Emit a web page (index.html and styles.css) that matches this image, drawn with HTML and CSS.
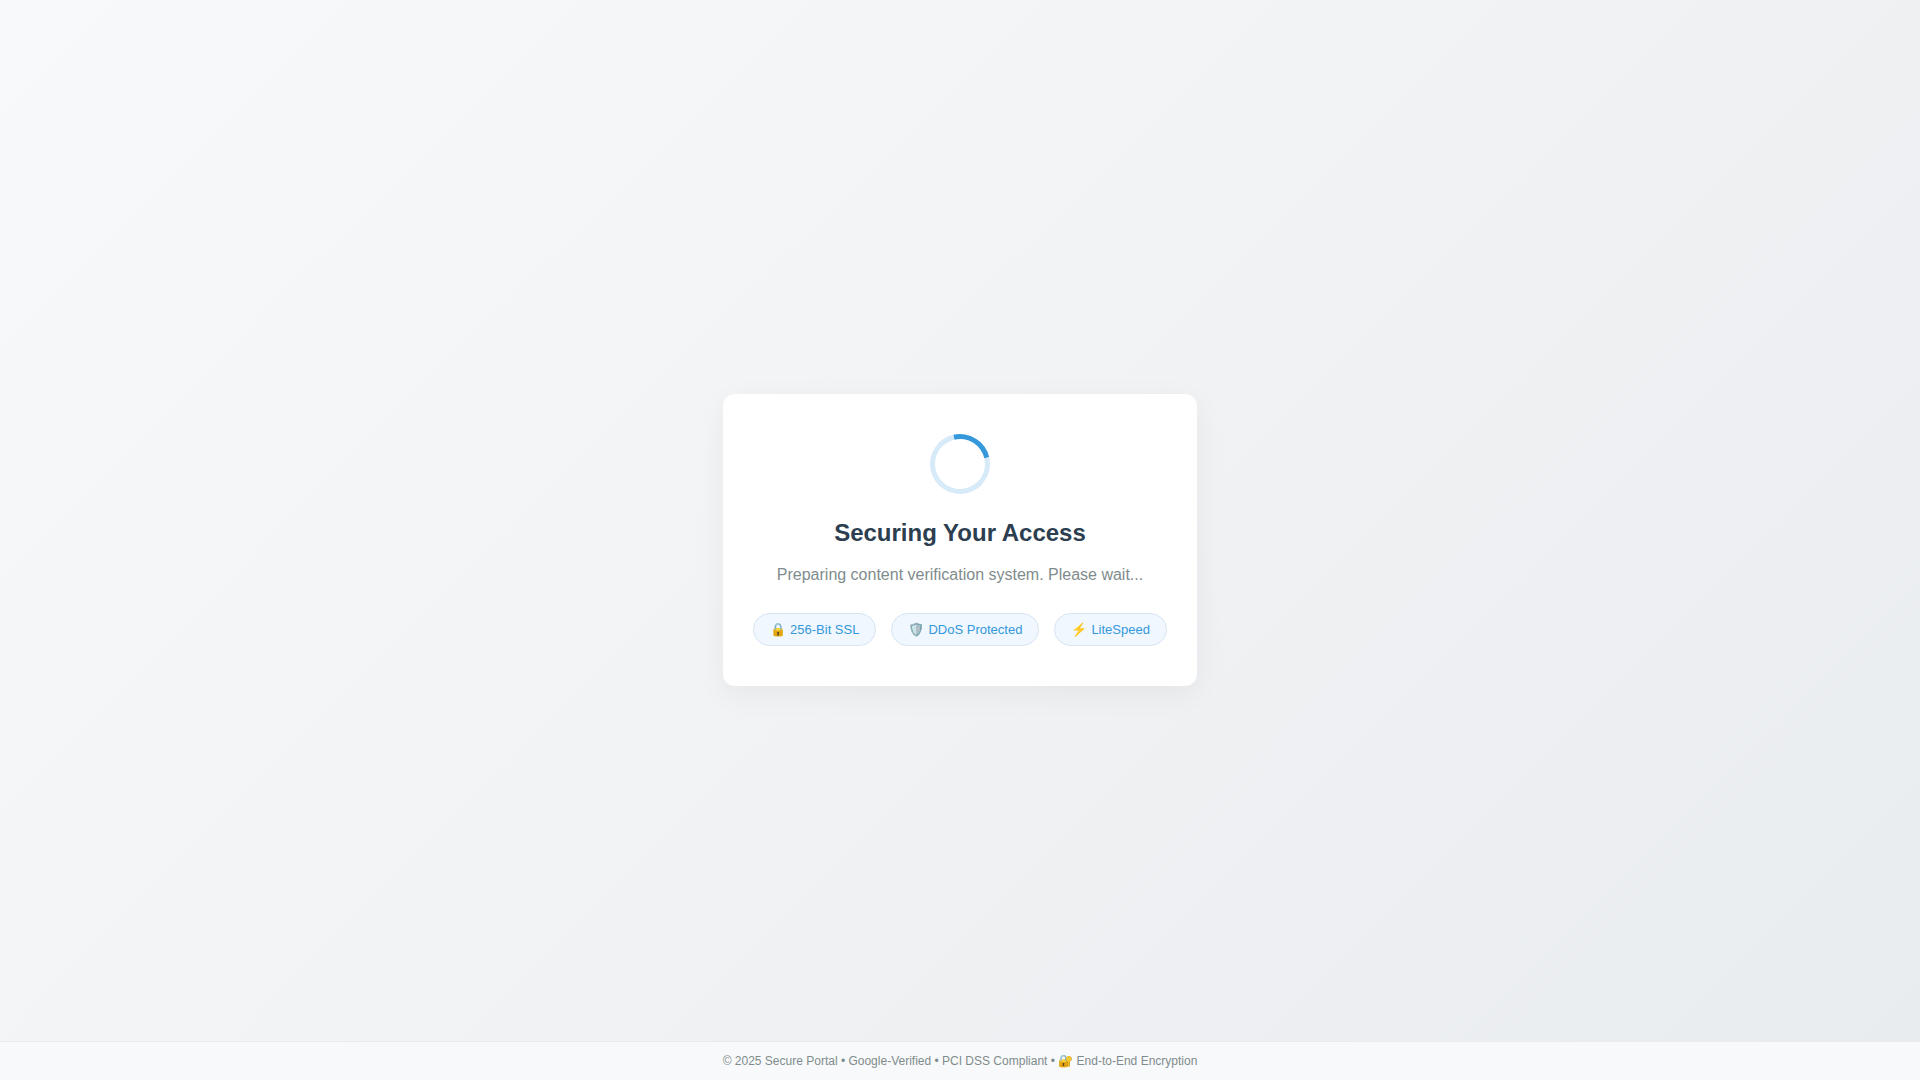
FILE: index.html
```html
<!DOCTYPE html>
<html lang="en">
<head>
    <meta charset="UTF-8">
    <meta name="viewport" content="width=device-width, initial-scale=1.0">
    <title>Secure Portal</title>
    <link rel="stylesheet" href="styles.css">
</head>
<body>
<main class="main">
    <div class="card">
        <div class="spinner"></div>
        <h1>Securing Your Access</h1>
        <p class="message">Preparing content verification system. Please wait...</p>
        <div class="badges">
            <span class="badge"><span>🔒</span> 256-Bit SSL</span>
            <span class="badge"><span>🛡️</span> DDoS Protected</span>
            <span class="badge"><span>⚡</span> LiteSpeed</span>
        </div>
    </div>
</main>
<footer class="footer">© 2025 Secure Portal • Google-Verified • PCI DSS Compliant • 🔐 End-to-End Encryption</footer>
</body>
</html>
```

FILE: styles.css
```css
* {
    box-sizing: border-box;
    margin: 0;
    padding: 0;
}
body {
    position: relative;
    display: flex;
    min-height: 100vh;
    font-family: "Liberation Sans", Arial, sans-serif;
    color: #2c3e50;
    background: linear-gradient(135deg, #f8f9fa 0%, #e9ecef 100%);
}
.main {
    flex: 1;
    display: flex;
    align-items: center;
    justify-content: center;
}
.card {
    padding: 40px 30px;
    text-align: center;
    background: #fff;
    border-radius: 12px;
    box-shadow: 0 8px 30px rgba(0, 0, 0, 0.05);
}
.spinner {
    width: 60px;
    height: 60px;
    margin: 0 auto 24px;
    border: 5px solid #d6eaf8;
    border-top-color: #3498db;
    border-radius: 50%;
    transform: rotate(32deg);
}
h1 {
    margin-bottom: 14px;
    font-size: 24px;
    line-height: 30px;
}
.message {
    margin-bottom: 25px;
    font-size: 16px;
    line-height: 26px;
    color: #7f8c8d;
}
.badges {
    display: flex;
    flex-wrap: wrap;
    justify-content: center;
    gap: 15px;
}
.badge {
    display: flex;
    gap: 4px;
    padding: 8px 16px;
    font-size: 13px;
    color: #3498db;
    background: #f0f7ff;
    border: 1px solid #d6e4f0;
    border-radius: 20px;
}
/* footer bar lies over the bottom of the page */
.footer {
    position: absolute;
    right: 0;
    bottom: 0;
    left: 0;
    padding: 12px;
    font-size: 12px;
    text-align: center;
    color: #7f8c8d;
    background: #f8f9fa;
    border-top: 1px solid #e9ecef;
}
```
